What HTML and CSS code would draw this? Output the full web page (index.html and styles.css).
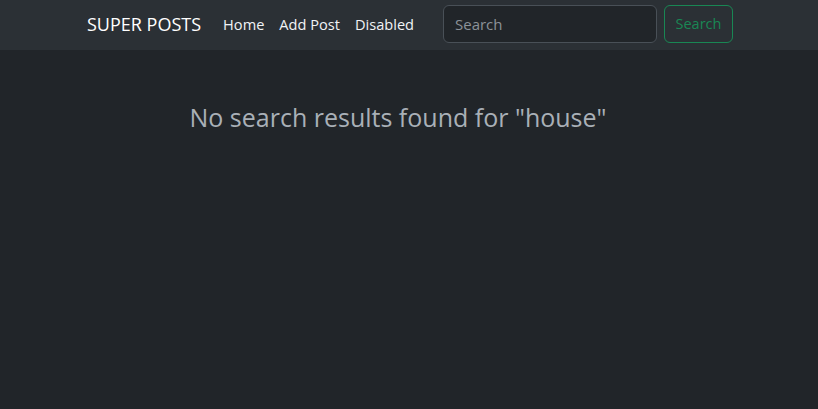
FILE: index.html
```html
<!DOCTYPE html>
<html lang="en">
<head>
    <meta charset="UTF-8">
    <meta name="viewport" content="width=device-width, initial-scale=1.0">
    <title>Super Posts</title>
    <link rel="stylesheet" href="styles.css">
</head>
<body>

    <nav class="navbar">
        <div class="nav-container">
            <a class="brand" href="#">SUPER POSTS</a>
            <ul class="nav-links">
                <li><a href="#">Home</a></li>
                <li><a href="#">Add Post</a></li>
                <li><a href="#" class="disabled">Disabled</a></li>
            </ul>
            <form class="search-form">
                <input type="search" placeholder="Search" value="">
                <button type="submit">Search</button>
            </form>
        </div>
    </nav>

    <main class="content">
        <h2 class="no-results">No search results found for "house"</h2>
    </main>

</body>
</html>
```

FILE: styles.css
```css
body {
    margin: 0;
    font-family: "Open Sans", "Noto Sans", sans-serif;
    background-color: #212529;
    color: #dee2e6;
    height: 409px;
}
.navbar {
    background-color: #2b3035;
    height: 50px;
    box-sizing: border-box;
    padding-bottom: 3px;
}
.nav-container {
    display: flex;
    align-items: center;
    box-sizing: border-box;
    width: 648px;
    height: 100%;
    margin: 0 auto;
    padding-left: 2px;
}
.brand {
    color: #fff;
    text-decoration: none;
    font-size: 18px;
    margin-right: 22px;
}
.nav-links {
    display: flex;
    list-style: none;
    margin: 0;
    padding: 0;
    gap: 15px;
}
.nav-links a {
    color: #f1f3f5;
    text-decoration: none;
    font-size: 14.6px;
}
.search-form {
    display: flex;
    gap: 7px;
    margin-left: auto;
}
.search-form input {
    width: 214px;
    height: 38px;
    box-sizing: border-box;
    padding: 6px 11px;
    background-color: #212529;
    border: 1px solid #495057;
    border-radius: 6px;
    color: #dee2e6;
    font-family: inherit;
    font-size: 15px;
}
.search-form input::placeholder {
    color: #8c9298;
}
.search-form button {
    width: 69px;
    height: 38px;
    padding: 0;
    background: transparent;
    border: 1px solid #198754;
    border-radius: 6px;
    color: #198754;
    font-family: inherit;
    font-size: 14.5px;
    cursor: pointer;
}
.content {
    text-align: center;
    padding-top: 50px;
}
.no-results {
    margin: 0;
    margin-right: 22px;
    font-weight: 400;
    font-size: 25px;
    color: #a9b0b7;
}
```
